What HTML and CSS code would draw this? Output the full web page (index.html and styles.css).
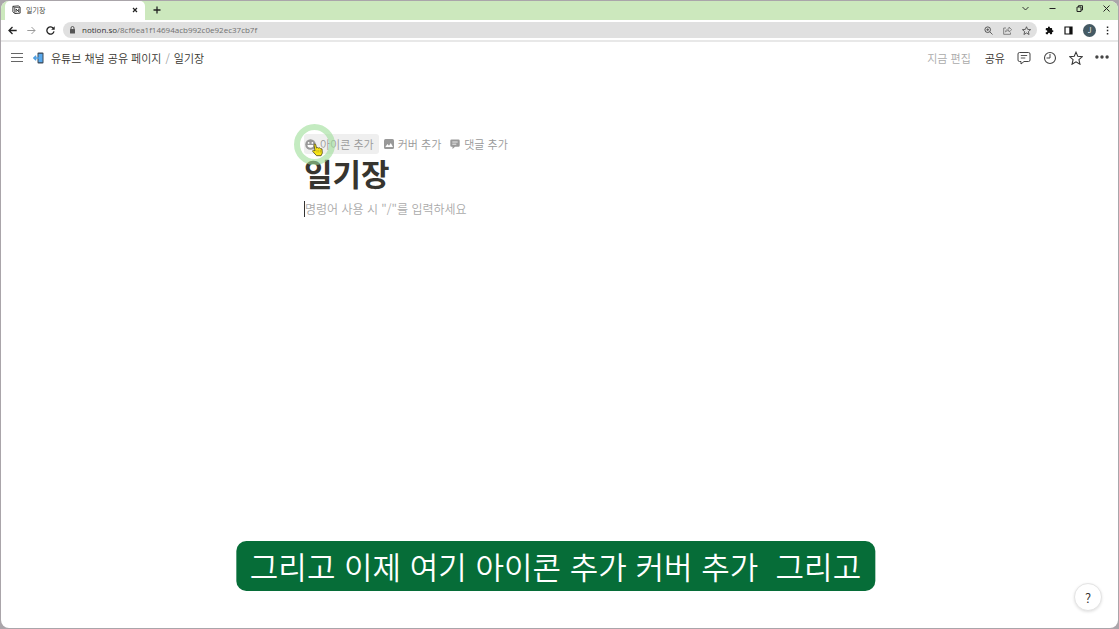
FILE: index.html
```html
<!DOCTYPE html>
<html lang="ko">
<head>
  <meta charset="UTF-8">
  <title>일기장</title>
  <link rel="stylesheet" href="styles.css">
</head>
<body>

<div class="window">
  <div class="tab-strip">
    <div class="tab">
      <svg class="favicon" viewBox="0 0 20 20"><path d="M2 3l12-1 4 3v13l-12 1-4-4z" fill="#fff" stroke="#222" stroke-width="2" stroke-linejoin="round"/><path d="M2 3l4 3 12-1M6 6v12" fill="none" stroke="#222" stroke-width="1.5"/><path d="M9 16V9l6 6V8" fill="none" stroke="#222" stroke-width="2"/></svg>
      <span class="tab-title">일기장</span>
      <button class="plain tab-close" aria-label="탭 닫기"><svg width="6" height="6" viewBox="0 0 6 6"><path d="M1 1l4 4M5 1L1 5" stroke="#222" stroke-width="1.2"/></svg></button>
    </div>
    <button class="plain new-tab" aria-label="새 탭"><svg width="8" height="8" viewBox="0 0 8 8"><path d="M4 0.5v7M0.5 4h7" stroke="#222" stroke-width="1.3"/></svg></button>
    <div class="window-buttons">
      <button class="plain" aria-label="탭 검색"><svg width="7" height="7" viewBox="0 0 7 7"><path d="M0.5 2l3 3 3-3" fill="none" stroke="#333"/></svg></button>
      <button class="plain" aria-label="최소화"><svg width="7" height="7" viewBox="0 0 7 7"><path d="M0.5 3.5h6" stroke="#222"/></svg></button>
      <button class="plain" aria-label="이전 크기로"><svg width="7" height="7" viewBox="0 0 7 7"><path d="M1 2h4v4.5H1zM2.5 2V0.7h4V5H5" fill="none" stroke="#222"/></svg></button>
      <button class="plain" aria-label="닫기"><svg width="7" height="7" viewBox="0 0 7 7"><path d="M0.5 0.5l6 6M6.5 0.5l-6 6" stroke="#222"/></svg></button>
    </div>
  </div>

  <div class="toolbar">
    <button class="plain" aria-label="뒤로"><svg width="9" height="9" viewBox="0 0 9 9"><path d="M8.7 4.5H1M4.5 1L1 4.5 4.5 8" fill="none" stroke="#222" stroke-width="1.3"/></svg></button>
    <button class="plain" aria-label="앞으로"><svg width="9" height="9" viewBox="0 0 9 9"><path d="M0.3 4.5H8M4.5 1L8 4.5 4.5 8" fill="none" stroke="#999"/></svg></button>
    <button class="plain" aria-label="새로고침"><svg width="9" height="9" viewBox="0 0 9 9"><path d="M7.6 2.7A3.6 3.6 0 1 0 8 5.3" fill="none" stroke="#222" stroke-width="1.3"/><path d="M8.7 0.3v3.5H5.2z" fill="#222"/></svg></button>
    <div class="address">
      <svg width="7" height="8" viewBox="0 0 7 8"><rect x="1" y="3" width="5" height="4.5" rx="0.5" fill="#555"/><path d="M2 3.5V2a1.5 1.5 0 0 1 3 0v1.5" fill="none" stroke="#555"/></svg>
      <span class="url">notion.so<span class="url-path">/8cf6ea1f14694acb992c0e92ec37cb7f</span></span>
      <div class="address-actions">
        <button class="plain" aria-label="확대"><svg width="9" height="9" viewBox="0 0 9 9"><circle cx="3.7" cy="3.7" r="2.8" fill="none" stroke="#555"/><path d="M5.8 5.8L8.5 8.5M2.3 3.7h2.8M3.7 2.3v2.8" stroke="#555" stroke-width="0.9"/></svg></button>
        <button class="plain" aria-label="페이지 공유"><svg width="9" height="9" viewBox="0 0 9 9"><path d="M3 2H0.7v6.3h6.8V6.5" fill="none" stroke="#777" stroke-width="0.9"/><path d="M2.500 6c.2-2 1.300-3 3.500-3V1l2.700 2.700L6 6V4.500C4.500 4.500 3.400 5 2.500 6z" fill="none" stroke="#777" stroke-width="0.8"/></svg></button>
        <button class="plain" aria-label="북마크"><svg width="9" height="9" viewBox="0 0 24 24"><path d="M12 2l3 7 8 .7-6 5.200 1.800 7.800L12 18.600l-6.800 4.100L7 14.900 1 9.700 9 9z" fill="none" stroke="#444" stroke-width="2.200"/></svg></button>
      </div>
    </div>
    <div class="browser-actions">
      <button class="plain" aria-label="확장 프로그램"><svg width="9" height="9" viewBox="0 0 24 24"><path d="M20 11h-1V7a2 2 0 0 0-2-2h-4V3.500a2.500 2.500 0 0 0-5 0V5H4a2 2 0 0 0-2 2v4h1.500a2.700 2.700 0 0 1 0 5.400H2V20a2 2 0 0 0 2 2h4v-1.500a2.700 2.700 0 0 1 5.400 0V22H17a2 2 0 0 0 2-2v-4h1a2.500 2.500 0 0 0 0-5z" fill="#111"/></svg></button>
      <button class="plain" aria-label="측면 패널"><svg width="9" height="9" viewBox="0 0 9 9"><path d="M1 1h7v7H1z" fill="none" stroke="#111" stroke-width="1.2"/><path d="M5.3 1H8v7H5.3z" fill="#111"/></svg></button>
      <button class="plain profile" aria-label="프로필">J</button>
      <button class="plain" aria-label="메뉴"><svg width="3" height="9" viewBox="0 0 3 9"><path d="M0.8 0.5h1.5V2H0.8zM0.8 3.8h1.5v1.5H0.8zM0.8 7h1.5v1.5H0.8z" fill="#222"/></svg></button>
    </div>
  </div>

  <header class="topbar">
    <button class="plain" aria-label="사이드바 열기"><svg width="12" height="12" viewBox="0 0 12 12"><path d="M0 1.5h12M0 5.5h12M0 9.5h12" stroke="#666"/></svg></button>
    <nav class="breadcrumb">
      <a href="#" class="crumb"><svg width="12" height="12" viewBox="0 0 12 12"><rect x="4.5" y="0.5" width="6" height="11" rx="1" fill="#3b4856"/><rect x="5.5" y="1.8" width="4" height="8.4" fill="#59a9ed"/><path d="M1 6h5M3.2 3.7L0.8 6l2.4 2.3" fill="none" stroke="#4c9de0" stroke-width="1.4"/></svg>유튜브 채널 공유 페이지</a>
      <span class="slash">/</span>
      <a href="#" class="crumb">일기장</a>
    </nav>
    <div class="page-actions">
      <span class="edited">지금 편집</span>
      <button class="plain share">공유</button>
      <button class="plain" aria-label="댓글"><svg width="14" height="14" viewBox="0 0 14 14"><path d="M2.5 1.5h9a1.5 1.5 0 0 1 1.5 1.5v6a1.5 1.5 0 0 1-1.5 1.5H7L4 13v-2.5H2.5A1.5 1.5 0 0 1 1 9V3a1.5 1.5 0 0 1 1.5-1.5z" fill="none" stroke="#444"/><path d="M3.8 4.5h6.4M3.8 7h4.5" stroke="#444" stroke-width="0.9"/></svg></button>
      <button class="plain" aria-label="업데이트"><svg width="14" height="14" viewBox="0 0 14 14"><circle cx="7" cy="7" r="5.5" fill="none" stroke="#444" stroke-width="1.1"/><path d="M7 3v4H3.5" fill="none" stroke="#444"/></svg></button>
      <button class="plain" aria-label="즐겨찾기"><svg width="14" height="14" viewBox="0 0 24 24"><path d="M12 2l3 7 8 .7-6 5.200 1.800 7.800L12 18.600l-6.800 4.100L7 14.900 1 9.700 9 9z" fill="none" stroke="#333" stroke-width="1.800"/></svg></button>
      <button class="plain" aria-label="더보기"><svg width="14" height="14" viewBox="0 0 14 14"><g fill="#444"><circle cx="1.9" cy="6" r="1.7"/><circle cx="7" cy="6" r="1.7"/><circle cx="12.1" cy="6" r="1.7"/></g></svg></button>
    </div>
  </header>

  <main class="page">
    <div class="controls">
      <button class="control active"><svg width="11" height="11" viewBox="0 0 10 10"><circle cx="5" cy="5" r="4.800" fill="#999"/><circle cx="3.300" cy="3.600" r="0.800" fill="#fff"/><circle cx="6.700" cy="3.600" r="0.800" fill="#fff"/><path d="M2.200 5.500h5.600a2.800 2.500 0 0 1-5.600 0z" fill="#fff"/></svg>아이콘 추가</button>
      <button class="control"><svg width="10" height="10" viewBox="0 0 10 10"><rect width="10" height="10" rx="1.5" fill="#999"/><path d="M1.300 8l2.200-3 1.500 1.700L6.800 4 9 8z" fill="#fff"/></svg>커버 추가</button>
      <button class="control"><svg width="10" height="10" viewBox="0 0 10 10"><path d="M1.500 0.500h7a1.200 1.200 0 0 1 1.200 1.200v4.800a1.200 1.200 0 0 1-1.200 1.200H5L2.500 10V7.700h-1A1.200 1.200 0 0 1 .3 6.500V1.700A1.200 1.200 0 0 1 1.500.5z" fill="#999"/><path d="M2.300 3h5.400M2.300 5.200h4" stroke="#fff" stroke-width="0.800"/></svg>댓글 추가</button>
      <div class="pointer">
        <svg width="11" height="14" viewBox="0 0 11 14"><path d="M3 8L2 2.200C1.800.8 3.500.5 3.800 1.800l.7 3.200 1-.5 1 .6 1.200-.3.9.9 1.400.2.3 4.200-1.200 2.600H4.500L.8 8.500C.3 7.300 1.600 6.700 3 8z" fill="#f8e516" stroke="#4b4620" stroke-width="0.800"/><path d="M5 7v2.500M6.800 7v2.500M8.500 7v2.500" stroke="#a08f1a" stroke-width="0.500"/></svg>
      </div>
    </div>
    <h1>일기장</h1>
    <p class="placeholder">명령어 사용 시 "/"를 입력하세요</p>
  </main>

  <button class="help" aria-label="도움말">?</button>
</div>

<div class="caption">그리고 이제 여기 아이콘 추가 커버 추가&nbsp; 그리고</div>

</body>
</html>
```
FILE: styles.css
```css
* {
  margin: 0;
  padding: 0;
  box-sizing: border-box;
}

body {
  font-family: "Noto Sans CJK KR", sans-serif;
  font-size: 11px;
  font-weight: 350;
  color: #37352f;
  min-height: 100vh;
  background: #aaa5aa;
  padding: 1px;
  display: flex;
}

button {
  font: inherit;
  color: inherit;
}

svg {
  display: block;
  flex-shrink: 0;
}

a {
  color: inherit;
  text-decoration: none;
}

.plain {
  border: none;
  background: none;
  cursor: pointer;
}

.window {
  flex: 1;
  display: flex;
  flex-direction: column;
  background: #fff;
  border-radius: 8px;
  overflow: hidden;
}

.tab-strip {
  height: 19px;
  flex-shrink: 0;
  display: flex;
  align-items: center;
  background: #cce8bd;
  padding: 0 8px 0 4px;
}

.tab {
  width: 140px;
  height: 19px;
  display: flex;
  align-items: center;
  gap: 5px;
  padding: 0 7px 2px;
  background: #fff;
  border-radius: 5px 5px 0 0;
}

.favicon {
  width: 9px;
  height: 9px;
}

.tab-title {
  font-size: 7px;
  line-height: 12px;
}

.tab-close {
  margin-left: auto;
}

.new-tab {
  margin-left: 8px;
  padding-bottom: 2px;
}

.window-buttons {
  display: flex;
  gap: 20px;
  margin-left: auto;
  padding-bottom: 4px;
}

.toolbar {
  height: 22px;
  flex-shrink: 0;
  display: flex;
  align-items: center;
  gap: 10px;
  padding: 0 9px 0 7px;
  border-bottom: 2px solid #e8e8e8;
}

.address {
  flex: 1;
  height: 16px;
  display: flex;
  align-items: center;
  gap: 6px;
  margin: 0 -2px;
  padding: 0 6px;
  background: #e0e0e0;
  border-radius: 8px;
}

.url {
  font-family: "Open Sans", sans-serif;
  font-size: 8px;
  font-weight: 400;
  line-height: 12px;
  color: #333;
}

.url-path {
  color: #707070;
}

.address-actions {
  display: flex;
  gap: 10px;
  margin-left: auto;
}

.browser-actions {
  display: flex;
  align-items: center;
  gap: 10px;
}

.profile {
  width: 13px;
  height: 13px;
  border-radius: 50%;
  background: #455a64;
  color: #fff;
  font-size: 7px;
  line-height: 13px;
}

.topbar {
  height: 32px;
  flex-shrink: 0;
  display: flex;
  align-items: center;
  padding: 0 10px;
  padding-right: 9px;
}

.breadcrumb {
  display: flex;
  align-items: center;
  gap: 4px;
  margin-left: 10px;
}

.crumb {
  display: flex;
  align-items: center;
  gap: 6px;
}

.slash {
  color: #999;
}

.page-actions {
  display: flex;
  align-items: center;
  gap: 12px;
  margin-left: auto;
}

.edited {
  color: #aaa;
  margin-right: 2px;
}

.page {
  width: 100%;
  max-width: 511px;
  margin: 0 auto;
  padding-top: 60px;
}

.controls {
  position: relative;
  display: flex;
  gap: 5px;
}

.control {
  height: 20px;
  display: flex;
  align-items: center;
  gap: 4px;
  padding-right: 4px;
  border: none;
  border-radius: 3px;
  background: none;
  color: #999;
  cursor: pointer;
}

.active {
  padding: 0 5px 0 1px;
  background: #efefef;
}

.pointer {
  position: absolute;
  left: -10px;
  top: -10px;
  width: 41px;
  height: 41px;
  border: 6px solid rgba(156, 221, 151, 0.6);
  border-radius: 50%;
  padding: 13px 0 0 12px;
}

h1 {
  font-size: 31px;
  line-height: 38px;
  font-weight: 700;
}

.placeholder {
  font-size: 12px;
  line-height: 16px;
  margin-top: 9px;
  color: #aaa;
  border-left: 1px solid #333;
}

.help {
  position: absolute;
  right: 17px;
  bottom: 18px;
  width: 28px;
  height: 28px;
  border: 1px solid #e4e4e4;
  border-radius: 50%;
  background: #fff;
  box-shadow: 0 1px 3px rgba(0, 0, 0, 0.12);
  font-size: 13px;
  cursor: pointer;
}

.caption {
  position: absolute;
  left: 50%;
  bottom: 38px;
  transform: translateX(-50%);
  margin-left: -4px;
  padding: 0 14px;
  border-radius: 10px;
  background: #066d38;
  color: #fff;
  font-size: 31px;
  line-height: 50px;
  white-space: nowrap;
}
```
